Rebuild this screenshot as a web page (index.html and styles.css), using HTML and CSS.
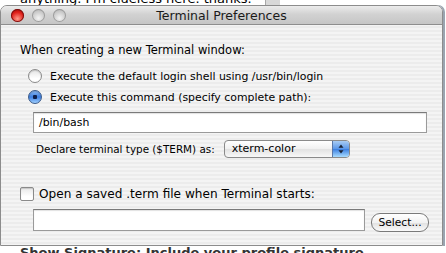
FILE: index.html
```html
<!DOCTYPE html>
<html lang="en">
  <head>
    <meta charset="UTF-8" />
    <title>Terminal Preferences</title>
    <link rel="stylesheet" href="styles.css">
  </head>
  <body>
    <div class="behind-top">
      <p class="behind-text">anything. I'm clueless here. thanks.</p>
      <div class="behind-scroll"></div>
    </div>

    <div class="window">
      <div class="titlebar">
        <div class="lights">
          <span class="light red"></span>
          <span class="light"></span>
          <span class="light"></span>
        </div>
        <div class="title">Terminal Preferences</div>
      </div>

      <div class="content">
        <h1>When creating a new Terminal window:</h1>

        <div class="options">
          <label class="radio-row">
            <span class="radio"></span>
            Execute the default login shell using /usr/bin/login
          </label>
          <label class="radio-row">
            <span class="radio on"></span>
            Execute this command (specify complete path):
          </label>
        </div>

        <div class="field cmd">/bin/bash</div>

        <div class="term-row">
          <span>Declare terminal type ($TERM) as:</span>
          <div class="popup">
            <span class="popup-value">xterm-color</span>
            <span class="popup-arrows">
              <svg width="6" height="10" viewBox="0 0 6 10">
                <path d="M3 0.5 L5.5 3.8 H0.5 Z" fill="#1a2233" />
                <path d="M3 9.5 L5.5 6.2 H0.5 Z" fill="#1a2233" />
              </svg>
            </span>
          </div>
        </div>

        <label class="check-row">
          <span class="checkbox"></span>
          Open a saved .term file when Terminal starts:
        </label>

        <div class="file-row">
          <div class="field file"></div>
          <button class="select-btn">Select...</button>
        </div>
      </div>
    </div>

    <div class="behind-bottom">Show Signature: Include your profile signature.</div>
  </body>
</html>
```

FILE: styles.css
```css
body {
  margin: 0;
  width: 446px;
  height: 253px;
  overflow: hidden;
  background: #ffffff;
  font-family: "Lucida Grande", "DejaVu Sans", sans-serif;
  color: #000;
}

.behind-top {
  height: 5px;
  overflow: hidden;
  display: flex;
}
.behind-text {
  margin: -8px 0 0 20px;
  width: 245px;
  font-size: 13px;
  line-height: 14px;
  white-space: nowrap;
}
.behind-scroll {
  width: 14px;
  background: #d8d8d8;
  border-left: 1px solid #a8a8a8;
}

.window {
  width: 441px;
  height: 239px;
  border: 1px solid #8c8c8c;
  border-radius: 7px 7px 0 0;
  overflow: hidden;
  background: repeating-linear-gradient(#ececec 0, #ececec 2px, #f4f4f4 2px, #f4f4f4 4px);
  box-shadow: 2px 0 0 #9aa4b0;
}

.titlebar {
  height: 18px;
  border-bottom: 1px solid #8e8e8e;
  background: linear-gradient(#ececec, #d2d2d2 45%, #c6c6c6);
  display: flex;
  align-items: center;
  position: relative;
}
.lights {
  display: flex;
  gap: 8px;
  padding-left: 10px;
}
.light {
  width: 13px;
  height: 13px;
  border-radius: 50%;
  background: radial-gradient(circle at 50% 70%, #f4f4f4, #c8c8c8 60%, #a8a8a8);
  box-shadow: inset 0 0 0 1px #9c9c9c;
}
.light.red {
  background: radial-gradient(circle at 50% 75%, #ff9a8a, #e0201a 55%, #8c0000);
  box-shadow: inset 0 0 0 1px #7a1010;
}
.title {
  position: absolute;
  left: 0;
  right: 0;
  text-align: center;
  font-size: 12.5px;
  color: #1a1a1a;
}

.content {
  padding: 17px 0 0 19px;
}
h1 {
  margin: 0;
  font-size: 11.5px;
  font-weight: normal;
  line-height: 16px;
}
.options {
  display: grid;
  gap: 7px;
  margin: 11px 0 0 8px;
}
.radio-row,
.check-row {
  display: flex;
  align-items: center;
  gap: 8px;
  height: 14px;
  font-size: 10.9px;
}
.radio {
  width: 12px;
  height: 12px;
  border-radius: 50%;
  border: 1px solid #8a8a8a;
  background: linear-gradient(#e4e4e4, #ffffff 70%);
  box-shadow: inset 0 1px 1px rgba(0, 0, 0, 0.15);
}
.radio.on {
  border-color: #3a5a8a;
  background: radial-gradient(circle, #10204a 0, #10204a 2px, transparent 2.5px),
    linear-gradient(#8cb8f0, #3c7ee0 50%, #a0d0ff);
}

.field {
  background: #fff;
  border: 1px solid #9a9a9a;
  border-top-color: #7a7a7a;
  box-shadow: inset 0 1px 1px rgba(0, 0, 0, 0.12);
  height: 19px;
  font-size: 10.9px;
  line-height: 20px;
  padding-left: 5px;
}
.cmd {
  width: 387px;
  margin: 8px 0 0 13px;
}

.term-row {
  display: flex;
  align-items: center;
  gap: 9px;
  margin: 7px 0 0 16px;
  font-size: 10.4px;
}
.popup {
  width: 124px;
  height: 16px;
  display: flex;
  border: 1px solid #8a8a8a;
  border-radius: 4px;
  overflow: hidden;
  background: linear-gradient(#ffffff, #f0f0f0 50%, #e2e2e2 51%, #f8f8f8);
}
.popup-value {
  flex: 1;
  padding-left: 7px;
  font-size: 11px;
  line-height: 16px;
}
.popup-arrows {
  width: 16px;
  display: flex;
  align-items: center;
  justify-content: center;
  border-left: 1px solid #5a78a8;
  background: linear-gradient(#a8ccf4, #5a96e8 50%, #3a7ee0 51%, #a8dcff);
}

.check-row {
  margin-top: 28px;
  gap: 5px;
  height: 16px;
  font-size: 12.1px;
}
.checkbox {
  width: 12px;
  height: 12px;
  border: 1px solid #8a8a8a;
  border-radius: 2px;
  background: linear-gradient(#e8e8e8, #ffffff 70%);
  box-shadow: inset 0 1px 1px rgba(0, 0, 0, 0.15);
}

.file-row {
  display: flex;
  align-items: flex-start;
  gap: 6px;
  margin: 7px 0 0 13px;
}
.file {
  width: 325px;
  height: 20px;
}
.select-btn {
  margin-top: 4px;
  width: 58px;
  height: 19px;
  padding: 0;
  border: 1px solid #7a7a7a;
  border-radius: 9px;
  background: linear-gradient(#ffffff, #f2f2f2 50%, #e0e0e0 51%, #fafafa);
  font-family: "Lucida Grande", "DejaVu Sans", sans-serif;
  font-size: 10.7px;
  color: #000;
}

.behind-bottom {
  margin: 0 0 0 20px;
  font-size: 13px;
  line-height: 14px;
  font-weight: bold;
  color: #333;
  white-space: nowrap;
}
```
